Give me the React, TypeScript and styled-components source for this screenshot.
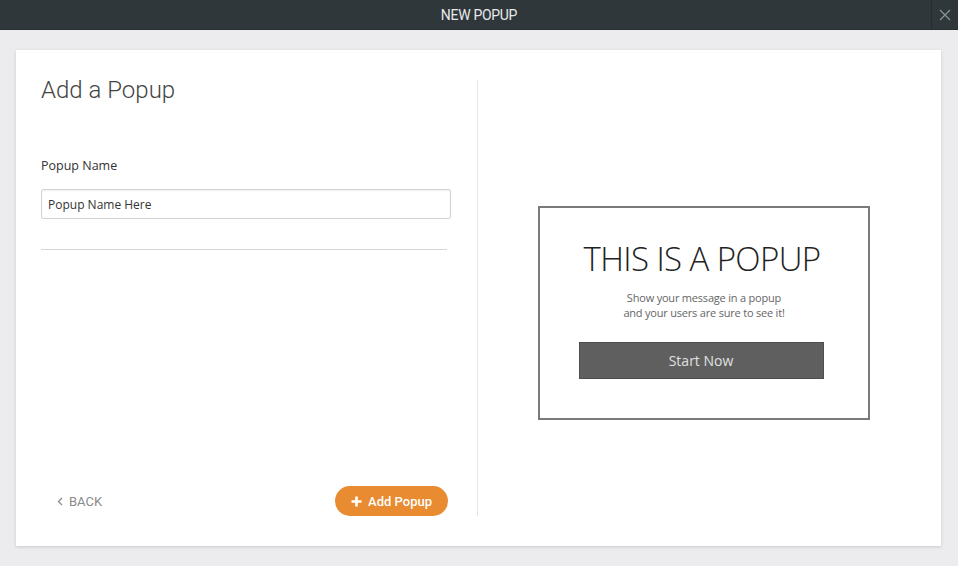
import React from "react";
import styled, { createGlobalStyle } from "styled-components";

const Global = createGlobalStyle`
  html, body { margin: 0; padding: 0; background: #ecebee; }
  body { font-family: "Open Sans", "Noto Sans", sans-serif; }
  * { box-sizing: border-box; }
`;

const Page = styled.div`
  width: 958px;
  height: 566px;
  display: flex;
  flex-direction: column;
  background: #ecebee;
  overflow: hidden;
`;

const TopBar = styled.header`
  height: 30px;
  background: #2f373b;
  display: grid;
  grid-template-columns: 1fr auto;
  align-items: stretch;
  border-bottom: 1px solid #2a3033;
`;

const TopTitle = styled.div`
  display: flex;
  align-items: center;
  justify-content: center;
  padding-left: 27px;
  color: #e8eaea;
  font-family: "Liberation Sans Narrow", "Roboto", sans-serif;
  font-size: 14px;
  letter-spacing: -0.3px;
`;

const CloseBtn = styled.button`
  width: 27px;
  border: 0;
  border-left: 1px solid #262c2f;
  background: transparent;
  display: flex;
  align-items: center;
  justify-content: center;
  padding: 0;
  cursor: pointer;
`;

const Main = styled.main`
  flex: 1;
  padding: 20px 17px 20px 16px;
  display: flex;
`;

const Card = styled.section`
  flex: 1;
  background: #fff;
  box-shadow: 0 1px 3px rgba(0, 0, 0, 0.15);
  padding: 30px 11px 30px 25px;
  display: grid;
  grid-template-columns: 437px 1fr;
`;

const LeftCol = styled.div`
  border-right: 1px solid #e6e6e6;
  padding-right: 27px;
  display: flex;
  flex-direction: column;
`;

const Heading = styled.h1`
  margin: 0;
  font-family: "Roboto", sans-serif;
  font-weight: 300;
  font-size: 24px;
  line-height: 20px;
  color: #444;
`;

const Label = styled.label`
  margin-top: 58px;
  font-size: 12.5px;
  color: #333;
  line-height: 16px;
`;

const Input = styled.input`
  margin-top: 15px;
  width: 410px;
  height: 30px;
  border: 1px solid #cfd2d6;
  border-radius: 2px;
  box-shadow: inset 0 1px 2px rgba(0, 0, 0, 0.06);
  padding: 0 6px;
  font-family: "Open Sans", sans-serif;
  font-size: 12px;
  color: #333;
  outline: none;
`;

const Rule = styled.hr`
  margin: 30px 0 0 0;
  width: 406px;
  border: 0;
  border-top: 1px solid #d4d4d4;
`;

const Footer = styled.div`
  margin-top: auto;
  width: 407px;
  display: flex;
  align-items: center;
  justify-content: space-between;
  padding-left: 16px;
`;

const BackLink = styled.a`
  display: flex;
  align-items: center;
  gap: 6px;
  font-family: "Roboto", sans-serif;
  font-size: 13px;
  color: #8a8a8a;
  text-decoration: none;
  cursor: pointer;
`;

const PrimaryBtn = styled.button`
  height: 30px;
  padding: 0 16px;
  border: 0;
  border-radius: 15px;
  background: #e98b30;
  color: #fff;
  font-family: "Roboto", sans-serif;
  font-weight: 500;
  font-size: 13px;
  display: flex;
  align-items: center;
  gap: 6px;
  cursor: pointer;
`;

const RightCol = styled.div`
  display: flex;
  justify-content: center;
  align-items: flex-start;
  padding-top: 126px;
`;

const Preview = styled.div`
  width: 332px;
  height: 214px;
  border: 2px solid #7a7a7a;
  display: flex;
  flex-direction: column;
  align-items: center;
  padding-top: 31px;
`;

const PreviewTitle = styled.div`
  font-family: "Open Sans", sans-serif;
  font-weight: 300;
  font-size: 33px;
  line-height: 40px;
  color: #222;
  letter-spacing: -0.6px;
  margin-right: 4px;
`;

const PreviewText = styled.p`
  margin: 11px 0 0 0;
  text-align: center;
  font-size: 11px;
  line-height: 15px;
  color: #666;
  letter-spacing: -0.2px;
`;

const PreviewBtn = styled.div`
  margin: 22px 6px 0 0;
  width: 245px;
  height: 37px;
  background: #5f5f5f;
  border: 1px solid #4e4e4e;
  color: #e0e0e0;
  font-size: 14px;
  display: flex;
  align-items: center;
  justify-content: center;
`;

export default function App() {
  return (
    <Page>
      <Global />
      <TopBar>
        <TopTitle>NEW POPUP</TopTitle>
        <CloseBtn aria-label="close">
          <svg width="12" height="12" viewBox="0 0 12 12">
            <path d="M1 1L11 11M11 1L1 11" stroke="#8c9497" strokeWidth="1.2" />
          </svg>
        </CloseBtn>
      </TopBar>
      <Main>
        <Card>
          <LeftCol>
            <Heading>Add a Popup</Heading>
            <Label>Popup Name</Label>
            <Input defaultValue="Popup Name Here" />
            <Rule />
            <Footer>
              <BackLink>
                <svg width="6" height="9" viewBox="0 0 6 9">
                  <path d="M5 1L1.5 4.5L5 8" stroke="#8a8a8a" strokeWidth="1.3" fill="none" />
                </svg>
                BACK
              </BackLink>
              <PrimaryBtn>
                <svg width="11" height="11" viewBox="0 0 11 11">
                  <path d="M5.5 0.5V10.5M0.5 5.5H10.5" stroke="#fff" strokeWidth="2.6" />
                </svg>
                Add Popup
              </PrimaryBtn>
            </Footer>
          </LeftCol>
          <RightCol>
            <Preview>
              <PreviewTitle>THIS IS A POPUP</PreviewTitle>
              <PreviewText>
                Show your message in a popup
                <br />
                and your users are sure to see it!
              </PreviewText>
              <PreviewBtn>Start Now</PreviewBtn>
            </Preview>
          </RightCol>
        </Card>
      </Main>
    </Page>
  );
}
